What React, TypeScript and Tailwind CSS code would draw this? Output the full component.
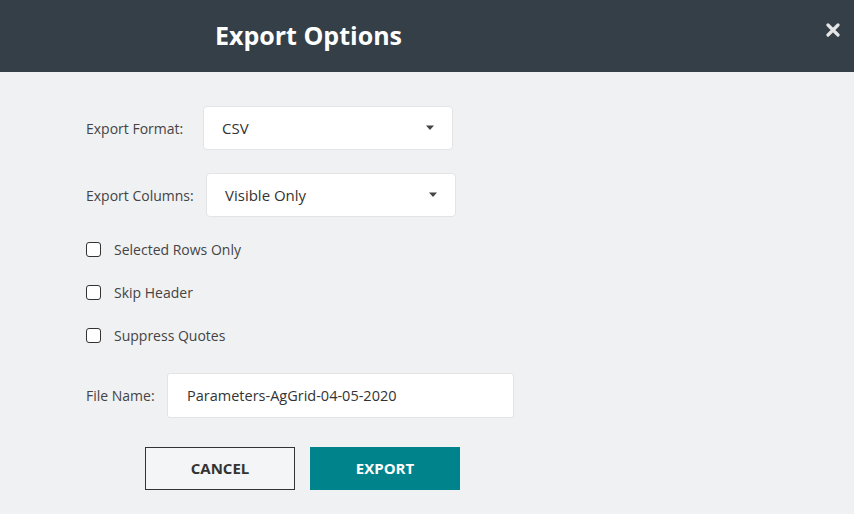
import React from 'react';

const Caret: React.FC = () => (
  <svg width="10" height="6" viewBox="0 0 10 6" className="text-[#444]">
    <path d="M1 0.5 L9 0.5 L5 5 Z" fill="currentColor" />
  </svg>
);

const SelectBox: React.FC<{ value: string }> = ({ value }) => (
  <div className="w-[250px] h-[44px] bg-white border border-[#e3e4e6] rounded-[4px] flex items-center justify-between pl-[18px] pr-[17px] text-[15px] text-[#333]">
    <span>{value}</span>
    <Caret />
  </div>
);

const Check: React.FC<{ label: string }> = ({ label }) => (
  <div className="flex items-center h-[22px]">
    <div className="w-[15px] h-[15px] border-[1.5px] border-[#333] rounded-[3px] bg-white" />
    <span className="ml-[13px] text-[14px] text-[#444]">{label}</span>
  </div>
);

export default function App() {
  return (
    <div
      className="w-[854px] h-[514px] bg-[#f0f1f3] flex flex-col"
      style={{ fontFamily: '"Open Sans", "Noto Sans", sans-serif' }}
    >
      {/* Header */}
      <header className="h-[72px] bg-[#343f48] flex items-center relative shrink-0">
        <h1 className="ml-[215px] text-[25px] font-bold text-white">Export Options</h1>
        <button className="absolute right-[14px] top-[23px] text-[#e6e6e6]">
          <svg width="14" height="14" viewBox="0 0 14 14">
            <path d="M2 2 L12 12 M12 2 L2 12" stroke="currentColor" strokeWidth="3.2" strokeLinecap="round" />
          </svg>
        </button>
      </header>

      {/* Body */}
      <main className="pl-[86px] pt-[34px] flex flex-col">
        <div className="flex items-center">
          <span className="w-[117px] text-[14px] text-[#444]">Export Format:</span>
          <SelectBox value="CSV" />
        </div>
        <div className="flex items-center mt-[23px]">
          <span className="w-[120px] text-[14px] text-[#444]">Export Columns:</span>
          <SelectBox value="Visible Only" />
        </div>

        <div className="flex flex-col gap-[21px] mt-[21px]">
          <Check label="Selected Rows Only" />
          <Check label="Skip Header" />
          <Check label="Suppress Quotes" />
        </div>

        <div className="flex items-center mt-[27px]">
          <span className="w-[81px] text-[14px] text-[#444]">File Name:</span>
          <div className="w-[347px] h-[45px] bg-white border border-[#e3e4e6] rounded-[3px] flex items-center pl-[19px] text-[14.5px] text-[#333]">
            Parameters-AgGrid-04-05-2020
          </div>
        </div>

        <div className="flex ml-[59px] mt-[29px] gap-[15px]">
          <button className="w-[150px] h-[43px] border border-[#333] bg-[#f4f5f6] text-[15px] font-bold text-[#333]">
            CANCEL
          </button>
          <button className="w-[150px] h-[43px] bg-[#00838a] text-[15px] font-bold text-white">
            EXPORT
          </button>
        </div>
      </main>
    </div>
  );
}
